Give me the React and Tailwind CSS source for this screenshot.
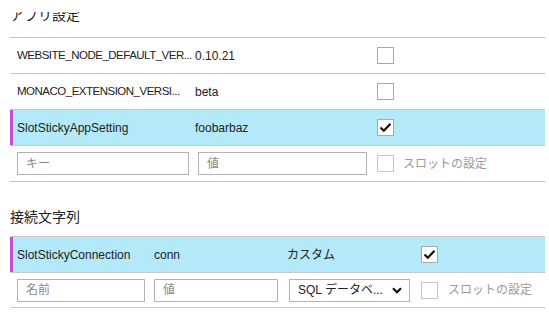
import React from "react";

function Check({ checked, light }) {
  return (
    <div
      className={`w-[17px] h-[17px] shrink-0 border bg-white flex items-center justify-center ${
        light ? "border-[#c6c6c6]" : "border-[#a9a9a9]"
      }`}
    >
      {checked && (
        <svg width="13" height="11" viewBox="0 0 13 11">
          <path d="M1.5 5.5 L4.8 8.8 L11.5 1.8" fill="none" stroke="#111" strokeWidth="2.2" />
        </svg>
      )}
    </div>
  );
}

function Field({ w, placeholder }) {
  return (
    <div className={`${w} h-[23px] shrink-0 border border-[#b3b3b3] bg-white flex items-center pl-[8px] text-[#8a8a8a]`}>
      {placeholder}
    </div>
  );
}

const appSettings = [
  { key: "WEBSITE_NODE_DEFAULT_VER...", value: "0.10.21", slot: false, caps: true },
  { key: "MONACO_EXTENSION_VERSI...", value: "beta", slot: false, caps: true },
  { key: "SlotStickyAppSetting", value: "foobarbaz", slot: true, caps: false },
];

export default function App() {
  return (
    <div className="w-[549px] h-[317px] overflow-hidden bg-white text-[12px] text-[#222] font-['Liberation_Sans','Noto_Sans_CJK_JP',sans-serif]">
      <div className="ml-[10px] w-[535px]">
        <div className="mt-[12px] h-[25px] overflow-hidden">
          <div className="-mt-[7px] text-[14px] leading-[20px]">アプリ設定</div>
        </div>

        {appSettings.map((row) => (
          <div
            key={row.key}
            className={`h-[36px] border-t border-[#c8c8c8] flex items-center pl-[7px] whitespace-nowrap ${
              row.slot ? "bg-[#b3e9f9] shadow-[inset_3px_0_0_#c64bd5]" : ""
            }`}
          >
            <div className={`w-[178px] overflow-hidden ${row.caps ? "text-[11.5px] tracking-[-0.5px]" : ""}`}>
              {row.key}
            </div>
            <div className="w-[182px]">{row.value}</div>
            <Check checked={row.slot} />
          </div>
        ))}

        <div className="h-[37px] border-y border-[#c8c8c8] flex items-center pl-[7px]">
          <Field w="w-[172px]" placeholder="キー" />
          <div className="w-[9px]" />
          <Field w="w-[169px]" placeholder="値" />
          <div className="w-[10px]" />
          <Check light />
          <div className="ml-[9px] text-[#9a9a9a]">スロットの設定</div>
        </div>

        <div className="h-[54px] pt-[25px]">
          <div className="text-[14px] leading-[20px]">接続文字列</div>
        </div>

        <div className="h-[36px] border-t border-[#c8c8c8] flex items-center pl-[7px] whitespace-nowrap bg-[#b3e9f9] shadow-[inset_3px_0_0_#c64bd5]">
          <div className="w-[137px]">SlotStickyConnection</div>
          <div className="w-[133px]">conn</div>
          <div className="w-[134px]">カスタム</div>
          <Check checked />
        </div>

        <div className="h-[36px] border-y border-[#c8c8c8] flex items-center pl-[7px] whitespace-nowrap">
          <Field w="w-[128px]" placeholder="名前" />
          <div className="w-[9px]" />
          <Field w="w-[124px]" placeholder="値" />
          <div className="w-[11px]" />
          <div className="w-[121px] h-[23px] shrink-0 border border-[#b3b3b3] bg-white flex items-center justify-between pl-[8px] pr-[7px]">
            <span>SQL データベ...</span>
            <svg width="10" height="7" viewBox="0 0 10 7">
              <path d="M1 1.2 L5 5.2 L9 1.2" fill="none" stroke="#111" strokeWidth="2.2" />
            </svg>
          </div>
          <div className="w-[11px]" />
          <Check light />
          <div className="ml-[10px] text-[#9a9a9a]">スロットの設定</div>
        </div>
      </div>
    </div>
  );
}
